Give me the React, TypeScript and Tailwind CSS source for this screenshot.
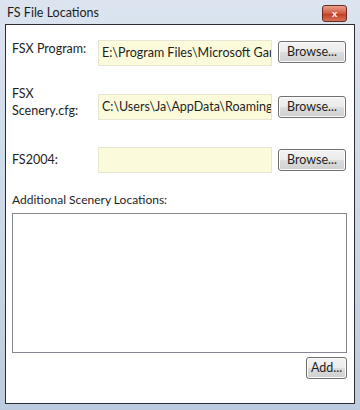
import React from 'react';

const font = { fontFamily: 'Lato, "Open Sans", Arial, sans-serif' };

const Button = ({ label, className = '' }: { label: string; className?: string }) => (
  <button
    className={`h-[22px] whitespace-nowrap rounded-[3px] border border-[#707070] bg-[linear-gradient(to_bottom,#f3f3f3_0%,#ebebeb_50%,#dddddd_51%,#cfcfcf_100%)] px-0 text-[12.5px] leading-none text-[#1e1e1e] shadow-[inset_0_0_0_1px_#fbfbfb] ${className}`}
  >
    {label}
  </button>
);

// visible part of the path only; the field clips the rest
const PathBox = ({ value }: { value: string }) => (
  <div className="flex h-[26px] w-[174px] items-center overflow-hidden whitespace-nowrap border border-[#e6e6d2] bg-[#fbfbdc] pl-[3px] text-[12.5px] text-[#1e1e1e]">
    {value}
  </div>
);

export default function App() {
  return (
    <div className="h-[410px] w-[360px] bg-[linear-gradient(to_bottom,#dbe4ef,#c9d6e6_60%,#bccbdd)] text-[12px]" style={font}>
      <div className="flex h-[24px] items-center justify-between pl-[7px] pr-[13px]">
        <span className="mt-[2px] text-[12.5px] text-[#1e1e1e]">FS File Locations</span>
        <div className="mt-[2px] flex h-[17px] w-[25px] items-center justify-center rounded-[3px] border border-[#6b2a22] bg-[linear-gradient(to_bottom,#eaa08c,#d0583e_50%,#bf3a1f_51%,#d8735a)] text-[10px] font-bold leading-none text-white">
          x
        </div>
      </div>
      <div className="mx-[5px] h-[380px] border border-[#2a2f36] bg-white">
        <div className="flex flex-col px-[6px] pt-[15px]">
          <div className="flex items-start">
            <div className="w-[86px] pt-[1px] text-[12.5px] leading-[16px] text-[#1e1e1e]">FSX Program:</div>
            <PathBox value="E:\Program Files\Microsoft Gam" />
            <Button label="Browse..." className="ml-[6px] mt-[1px] w-[68px]" />
          </div>
          <div className="mt-[28px] flex items-start">
            <div className="-mt-[9px] w-[86px] text-[12.5px] leading-[17px] text-[#1e1e1e]">
              FSX
              <br />
              Scenery.cfg:
            </div>
            <PathBox value="C:\Users\Ja\AppData\Roaming\" />
            <Button label="Browse..." className="ml-[6px] mt-[2px] w-[68px]" />
          </div>
          <div className="mt-[27px] flex items-center">
            <div className="w-[86px] text-[12.5px] text-[#1e1e1e]">FS2004:</div>
            <PathBox value="" />
            <Button label="Browse..." className="ml-[6px] w-[68px]" />
          </div>
          <div className="mt-[19px] leading-[16px] text-[#1e1e1e]">Additional Scenery Locations:</div>
          <div className="mt-[5px] h-[140px] w-[335px] border border-[#828790] bg-white" />
          <div className="mt-[4px] flex w-[335px] justify-end">
            <Button label="Add..." className="w-[41px]" />
          </div>
        </div>
      </div>
    </div>
  );
}
